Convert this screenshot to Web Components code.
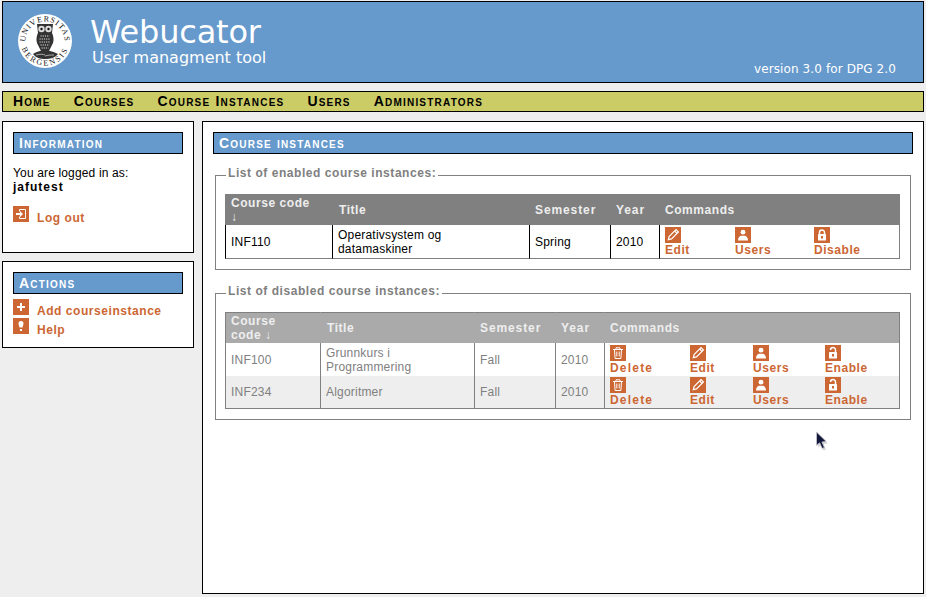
<!DOCTYPE html>
<html>
<head>
<meta charset="utf-8">
<title>Webucator</title>
<style>
  html, body { margin: 0; padding: 0; }
  body {
    background: #eeeeee;
    color: #000;
    font: 12px "Liberation Sans", Arial, sans-serif;
    height: 597px;
    overflow: hidden;
    position: relative;
  }
  #page { display: block; padding: 1px 2px 0 2px; }
  #cols { display: flex; gap: 8px; margin-top: 9px; }
  #side { display: flex; flex-direction: column; gap: 8px; width: 192px; flex: none; }
  #mouse { position: absolute; left: 815px; top: 431px; }
</style>
</head>
<body>
<div id="page">
  <uib-header></uib-header>
  <main-nav>
    <a href="#">Home</a>
    <a href="#">Courses</a>
    <a href="#">Course Instances</a>
    <a href="#">Users</a>
    <a href="#">Administrators</a>
  </main-nav>
  <div id="cols">
    <div id="side">
      <side-panel heading="Information" style="height:132px">
        <div style="padding-top:12px;line-height:14px;letter-spacing:.15px">You are logged in as:<br><b style="letter-spacing:1px">jafutest</b></div>
        <div style="margin-top:12px"><side-link icon="logout">Log out</side-link></div>
      </side-panel>
      <side-panel heading="Actions" style="height:87px">
        <div style="padding-top:5px">
          <side-link icon="add">Add courseinstance</side-link>
          <side-link icon="help">Help</side-link>
        </div>
      </side-panel>
    </div>
    <content-box heading="Course instances">
      <list-fieldset legend="List of enabled course instances:">
        <course-table widths="107,197,81,49,241" head-code="Course code<br>↓" cmd-cols="70,79,60">
          <course-row code="INF110" name="Operativsystem og<br>datamaskiner" semester="Spring" year="2010" commands="Edit,Users,Disable"></course-row>
        </course-table>
      </list-fieldset>
      <list-fieldset legend="List of disabled course instances:" style="margin-top:14px">
        <course-table disabled widths="95,154,81,49,296" head-code="Course<br>code ↓" cmd-cols="80,63,72,60">
          <course-row code="INF100" name="Grunnkurs i<br>Programmering" semester="Fall" year="2010" commands="Delete,Edit,Users,Enable"></course-row>
          <course-row code="INF234" name="Algoritmer" semester="Fall" year="2010" commands="Delete,Edit,Users,Enable"></course-row>
        </course-table>
      </list-fieldset>
    </content-box>
  </div>
</div>
<svg id="mouse" width="14" height="20" viewBox="0 0 14 20">
  <path d="M3 3 L3 16.500 L6 14 L8.500 19.500 L11 18.400 L8.500 13 L12.800 12.600 Z" fill="#bbb" opacity=".6"/>
  <path d="M1.500 1 L1.500 14.500 L4.600 11.800 L7.200 17.500 L9.400 16.400 L6.900 11 L11.300 10.600 Z" fill="#14183a" stroke="#c9c9d2" stroke-width=".8"/>
</svg>

<script>
const GLYPHS = {
  logout: '<path d="M6.500 3.500h6v9h-6M6.500 3.500v2M6.500 12.500v-2" fill="none" stroke="#fff"/><path d="M3 7h4V5l3 3-3 3V9H3z" fill="#fff"/>',
  add: '<path d="M7 4h2v3h3v2H9v3H7V9H4V7h3z" fill="#fff"/>',
  help: '<path d="M5.500 5.500a2.500 2.500 0 0 1 5 0c0 1.400-.8 2.400-1 4h-3c-.2-1.600-1-2.600-1-4z" fill="#fff"/><rect x="7" y="11" width="2" height="2" fill="#fff"/>',
  Edit: '<path d="M3.300 12.700l.8-3.200L11 2.600l2.400 2.400-6.900 6.900z" fill="none" stroke="#fff" stroke-width="1.200"/><path d="M9.600 4l2.400 2.400" stroke="#fff" stroke-width="1.200"/>',
  Users: '<circle cx="8" cy="5.200" r="2.400" fill="#fff"/><path d="M3 13.500c0-2.800 1.500-4.300 3-4.700h4c1.500.4 3 1.900 3 4.700z" fill="#fff"/>',
  Disable: '<path d="M5.500 7V5.500a2.500 2.500 0 0 1 5 0V7" fill="none" stroke="#fff" stroke-width="1.500"/><rect x="4" y="7" width="8" height="6.500" rx=".5" fill="#fff"/><rect x="7" y="9" width="2" height="2.500" fill="#cc6633"/>',
  Enable: '<path d="M5.500 5a2.500 2.500 0 0 1 5 0V7" fill="none" stroke="#fff" stroke-width="1.500"/><rect x="4" y="7" width="8" height="6.500" rx=".5" fill="#fff"/><rect x="7" y="9" width="2" height="2.500" fill="#cc6633"/>',
  Delete: '<path d="M3 4.500h10M6 4.500V2.800h4v1.700M4.500 4.500l.6 9h5.800l.6-9M6.800 6.500V11.500M9.200 6.500V11.500" fill="none" stroke="#fff"/>'
};

function icon(name) {
  return `<svg width="16" height="16" viewBox="0 0 16 16" style="display:block"><rect width="16" height="16" fill="#cc6633"/>${GLYPHS[name]}</svg>`;
}

class UibHeader extends HTMLElement {
  constructor() {
    super();
    this.attachShadow({ mode: "open" });
    this.shadowRoot.innerHTML = `
      <style>
        :host {
          display: flex;
          height: 80px;
          border: 1px solid #000;
          background: #6699cc;
          color: #fff;
          font-family: "DejaVu Sans", sans-serif;
        }
        svg { flex: none; margin: 11px 0 0 14px; }
        .titles { margin-left: 17px; }
        h1 { margin: 14px 0 0 0; font-size: 32px; line-height: 32px; font-weight: normal; letter-spacing: -.2px; }
        p { margin: 0 0 0 2px; font-size: 16px; line-height: 20px; }
        .version { margin: auto 27px 5px auto; font-size: 12px; line-height: 15px; letter-spacing: .1px; }
      </style>
      <svg width="56" height="56" viewBox="0 0 56 56">
        <defs>
          <path id="top" d="M9.700 34.700A19.500 19.500 0 1 1 46.300 34.700"/>
          <path id="bot" d="M3.500 28A24.500 24.500 0 0 0 52.500 28"/>
        </defs>
        <circle cx="28" cy="28" r="27" fill="#fff"/>
        <text font-family="Liberation Serif, serif" font-size="8" fill="#111" letter-spacing="1" text-anchor="middle"><textPath href="#top" startOffset="50%">UNIVERSITAS</textPath></text>
        <text font-family="Liberation Serif, serif" font-size="8" fill="#111" letter-spacing="2" text-anchor="middle"><textPath href="#bot" startOffset="50%">BERGENSIS</textPath></text>
        <path d="M20 11h16l-1 9c2 4 2 9 0 12l-3 6h-8l-3-6c-2-3-2-8 0-12z" fill="#333"/>
        <circle cx="24.500" cy="16" r="3.200" fill="#ddd"/><circle cx="31.500" cy="16" r="3.200" fill="#ddd"/>
        <circle cx="24.500" cy="16" r="1.200" fill="#111"/><circle cx="31.500" cy="16" r="1.200" fill="#111"/>
        <path d="M23.500 23h9M22.500 26h11M22.500 29h11M23.500 32h9M24.500 35h7" stroke="#e4e4e4" stroke-width="1" stroke-dasharray="1.200 1"/>
        <path d="M16 41c3-2 8-4 12-3 4-1 9 1 13 3-3 4-8 5-13 5s-9-1-12-5z" fill="#333"/>
        <path d="M19 42c4-1 7-1 9 0M28 43c3-1 6-1 9-1" stroke="#ddd" stroke-width=".7" fill="none"/>
      </svg>
      <div class="titles">
        <h1>Webucator</h1>
        <p>User managment tool</p>
      </div>
      <div class="version">version 3.0 for DPG 2.0</div>`;
  }
}

class MainNav extends HTMLElement {
  constructor() {
    super();
    this.attachShadow({ mode: "open" });
    this.shadowRoot.innerHTML = `
      <style>
        :host {
          display: flex;
          gap: 23px;
          height: 19px;
          margin-top: 8px;
          padding-left: 10px;
          border: 1px solid #000;
          background: #cccc66;
          font: bold 14px/18px "Liberation Sans", sans-serif;
          font-variant: small-caps;
          letter-spacing: 1.200px;
        }
        ::slotted(a) { color: #000; text-decoration: none; }
      </style>
      <slot></slot>`;
  }
}

class PanelTitle extends HTMLElement {
  constructor() {
    super();
    this.attachShadow({ mode: "open" });
    this.shadowRoot.innerHTML = `
      <style>
        :host {
          display: block;
          height: 20px;
          padding-left: 5px;
          border: 1px solid #000;
          background: #6699cc;
          color: #fff;
          font: bold 14px/20px "Liberation Sans", sans-serif;
          font-variant: small-caps;
          letter-spacing: 1.200px;
        }
      </style>
      <slot></slot>`;
  }
}

class SidePanel extends HTMLElement {
  constructor() {
    super();
    this.attachShadow({ mode: "open" });
    this.shadowRoot.innerHTML = `
      <style>
        :host {
          display: block;
          box-sizing: border-box;
          padding: 10px;
          border: 1px solid #000;
          background: #fff;
        }
      </style>
      <panel-title>${this.getAttribute("heading")}</panel-title>
      <slot></slot>`;
  }
}

class SideLink extends HTMLElement {
  constructor() {
    super();
    this.attachShadow({ mode: "open" });
    this.shadowRoot.innerHTML = `
      <style>
        :host {
          display: flex;
          gap: 8px;
          height: 19px;
          color: #cc6633;
          font-weight: bold;
          letter-spacing: .55px;
        }
        span { padding-top: 5px; line-height: 14px; }
      </style>
      ${icon(this.getAttribute("icon"))}
      <span><slot></slot></span>`;
  }
}

class ContentBox extends HTMLElement {
  constructor() {
    super();
    this.attachShadow({ mode: "open" });
    this.shadowRoot.innerHTML = `
      <style>
        :host {
          display: block;
          flex: 1;
          box-sizing: border-box;
          height: 473px;
          padding: 10px;
          border: 1px solid #000;
          background: #fff;
        }
        .body { padding: 12px 2px 0 2px; }
      </style>
      <panel-title>${this.getAttribute("heading")}</panel-title>
      <div class="body"><slot></slot></div>`;
  }
}

class ListFieldset extends HTMLElement {
  constructor() {
    super();
    this.attachShadow({ mode: "open" });
    this.shadowRoot.innerHTML = `
      <style>
        :host { display: block; }
        fieldset {
          margin: 0;
          padding: 10px 10px 10px 9px;
          border: 1px solid #808080;
        }
        legend {
          margin-left: 1px;
          padding: 0 2px 4px 2px;
          color: #808080;
          font: bold 12px/14px "Liberation Sans", sans-serif;
          letter-spacing: .55px;
        }
      </style>
      <fieldset>
        <legend>${this.getAttribute("legend")}</legend>
        <slot></slot>
      </fieldset>`;
  }
}

class CourseRow extends HTMLElement {}

class CourseTable extends HTMLElement {
  connectedCallback() {
    if (this.shadowRoot) return;
    this.attachShadow({ mode: "open" });
    const disabled = this.hasAttribute("disabled");
    const line = disabled ? "#808080" : "#000";
    const widths = this.getAttribute("widths").split(",");
    const cmdCols = this.getAttribute("cmd-cols").split(",");
    const cols = widths.map(w => `<col style="width:${w}px">`).join("");
    const all = [...this.querySelectorAll("course-row")];
    const rows = all.map((r, i) => {
      const cmds = r.getAttribute("commands").split(",").map((c, j) => `
        <a href="#" style="width:${cmdCols[j] || 60}px">${icon(c)}<span class="${c.toLowerCase()}">${c}</span></a>`).join("");
      return `<tr class="${i % 2 ? "alt" : ""}${i == all.length - 1 ? " last" : ""}">
        <td>${r.getAttribute("code")}</td>
        <td>${r.getAttribute("name")}</td>
        <td>${r.getAttribute("semester")}</td>
        <td>${r.getAttribute("year")}</td>
        <td class="cmds"><div>${cmds}</div></td>
      </tr>`;
    }).join("");
    this.shadowRoot.innerHTML = `
      <style>
        :host { display: block; }
        table {
          width: 100%;
          table-layout: fixed;
          border-collapse: separate;
          border-spacing: 0;
          font: 12px/14px "Liberation Sans", sans-serif;
          letter-spacing: .2px;
          color: ${disabled ? "#808080" : "#000"};
        }
        th {
          height: 31px;
          padding: 0 5px;
          box-sizing: border-box;
          background: ${disabled ? "#aaaaaa" : "#808080"};
          color: #eee;
          font-weight: bold;
          text-align: left;
          letter-spacing: .55px;
          border-top: 1px solid #808080;
          border-left: 1px solid ${disabled ? "#aaaaaa" : "#808080"};
        }
        th:first-child { border-left-color: #808080; }
        th:nth-child(2) { padding-left: 6px; }
        th:nth-child(3), th:nth-child(4) { letter-spacing: .9px; }
        th:last-child { border-right: 1px solid #808080; }
        td {
          padding: 0 5px;
          border-left: 1px solid ${line};
          height: 33px;
          box-sizing: border-box;
        }
        td:last-child { border-right: 1px solid #808080; }
        .last td { height: ${disabled ? 33 : 34}px; border-bottom: 1px solid #808080; }
        .alt td { background: #eeeeee; }
        td.cmds { padding: 2px 0 0 5px; vertical-align: top; }
        .alt td.cmds { padding-top: 1px; }
        .cmds div { display: flex; }
        a {
          display: block;
          flex: none;
          color: #cc6633;
          font-weight: bold;
          letter-spacing: .55px;
          text-decoration: none;
          line-height: 13px;
        }
        a span { display: block; padding-top: 1px; }
        a span.delete { letter-spacing: 1.200px; }
      </style>
      <table>
        <colgroup>${cols}</colgroup>
        <tr><th>${this.getAttribute("head-code")}</th><th>Title</th><th>Semester</th><th>Year</th><th>Commands</th></tr>
        ${rows}
      </table>`;
  }
}

customElements.define("panel-title", PanelTitle);
customElements.define("uib-header", UibHeader);
customElements.define("main-nav", MainNav);
customElements.define("side-panel", SidePanel);
customElements.define("side-link", SideLink);
customElements.define("content-box", ContentBox);
customElements.define("list-fieldset", ListFieldset);
customElements.define("course-row", CourseRow);
customElements.define("course-table", CourseTable);
</script>
</body>
</html>
